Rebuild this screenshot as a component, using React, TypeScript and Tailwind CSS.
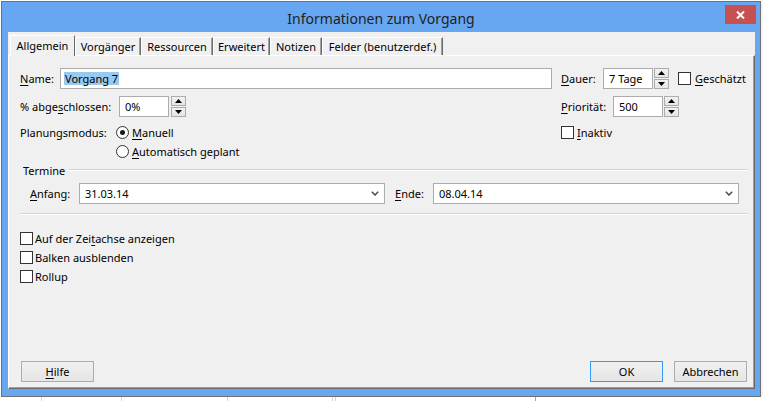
import React from "react";

const TABS = [
  { label: "Allgemein", w: "w-[65px]", active: true },
  { label: "Vorgänger", w: "w-[66px]" },
  { label: "Ressourcen", w: "w-[72px]" },
  { label: "Erweitert", w: "w-[57px]" },
  { label: "Notizen", w: "w-[52px]" },
  { label: "Felder (benutzerdef.)", w: "w-[121px]" },
];

function U({ children }: { children: React.ReactNode }) {
  return <span className="underline underline-offset-[2px] decoration-[1px]">{children}</span>;
}

function Check() {
  return <div className="w-[13px] h-[13px] shrink-0 border border-[#333333] bg-white" />;
}

function Radio({ checked = false }: { checked?: boolean }) {
  return (
    <div className="w-[13px] h-[13px] shrink-0 rounded-full border border-[#333333] bg-white flex items-center justify-center">
      {checked && <div className="w-[5px] h-[5px] rounded-full bg-[#1a1a1a]" />}
    </div>
  );
}

function Arrow({ up }: { up?: boolean }) {
  return (
    <svg width="7" height="4" viewBox="0 0 7 4">
      <path d={up ? "M3.5 0L7 4H0z" : "M0 0H7L3.5 4z"} fill="#000" />
    </svg>
  );
}

function Spin() {
  return (
    <div className="flex flex-col w-[15px] h-[21px] gap-[1px] shrink-0">
      <div className="flex-1 border border-[#acacac] bg-gradient-to-b from-[#f2f2f2] to-[#e5e5e5] flex items-center justify-center">
        <Arrow up />
      </div>
      <div className="flex-1 border border-[#acacac] bg-gradient-to-b from-[#f2f2f2] to-[#e5e5e5] flex items-center justify-center">
        <Arrow />
      </div>
    </div>
  );
}

function Combo({ value }: { value: string }) {
  return (
    <div className="w-[306px] h-[21px] border border-[#acacac] bg-white flex items-center pl-[5px] pr-[5px]">
      <span className="flex-1">{value}</span>
      <svg width="8" height="5" viewBox="0 0 8 5">
        <path d="M0.8 0.8L4 4L7.2 0.8" fill="none" stroke="#4a4a4a" strokeWidth="1.5" />
      </svg>
    </div>
  );
}

function Button({ children, primary }: { children: React.ReactNode; primary?: boolean }) {
  return (
    <div
      className={`w-[73px] h-[21px] flex items-center justify-center border bg-gradient-to-b from-[#f0f0f0] to-[#e5e5e5] ${
        primary ? "border-[#3399ff]" : "border-[#acacac]"
      }`}
    >
      {children}
    </div>
  );
}

export default function App() {
  return (
    <div className="w-[763px] h-[401px] bg-white overflow-hidden font-['Noto_Sans',sans-serif] text-[11px] text-black leading-none">
      <div className="flex">
        {/* ── Window ── */}
        <div className="relative ml-[1px] mt-[1px] w-[760px] h-[396px] border border-[#707070] bg-[#67a6f0] flex flex-col">
          <div className="absolute top-[3px] right-[4px] w-[31px] h-[19px] bg-[#c75050] flex items-center justify-center">
            <svg width="9" height="8" viewBox="0 0 9 8">
              <path d="M1 0.5L8 7.5M8 0.5L1 7.5" stroke="#fff" strokeWidth="2" />
            </svg>
          </div>

          <div className="h-[30px] flex items-center justify-center pt-[3px] text-[14px] text-[#1e1e1e]">
            Informationen zum Vorgang
          </div>

          {/* ── Client ── */}
          <div className="ml-[6px] w-[747px] bg-[#f0f0f0] flex flex-col">
            <div className="h-[23px] flex items-end pl-[2px]">
              {TABS.map((t) =>
                t.active ? (
                  <div
                    key={t.label}
                    className={`${t.w} h-[21px] -mb-[1px] relative z-10 bg-[#f0f0f0] border-t border-l border-r border-t-white border-l-white border-r-[#696969] flex items-center justify-center pb-[2px]`}
                  >
                    {t.label}
                  </div>
                ) : (
                  <div
                    key={t.label}
                    className={`${t.w} h-[18px] bg-[#f0f0f0] border-t border-l border-r border-t-white border-l-white border-r-[#696969] shadow-[inset_-1px_0_0_#a0a0a0] flex items-center justify-center pb-[1px]`}
                  >
                    {t.label}
                  </div>
                )
              )}
            </div>

            {/* ── Tab page ── */}
            <div className="h-[334px] border border-t-white border-l-white border-r-[#696969] border-b-[#696969] shadow-[inset_-1px_-1px_0_#a0a0a0] pl-[11px] pr-[6px] flex flex-col">
              {/* Name / Dauer */}
              <div className="mt-[12px] h-[21px] flex items-center">
                <div className="w-[541px] flex items-center">
                  <span className="w-[40px]"><U>N</U>ame:</span>
                  <div className="w-[492px] h-[21px] border border-[#acacac] bg-white flex items-center pl-[3px]">
                    <span className="bg-[#99c9ef] px-[1px] h-[13px] flex items-center">Vorgang 7</span>
                  </div>
                </div>
                <span className="w-[42px]"><U>D</U>auer:</span>
                <div className="w-[50px] h-[21px] border border-[#acacac] bg-white flex items-center pl-[5px]">7 Tage</div>
                <div className="ml-[1px]"><Spin /></div>
                <div className="ml-[9px]"><Check /></div>
                <span className="ml-[4px]"><U>G</U>eschätzt</span>
              </div>

              {/* % abgeschlossen / Priorität */}
              <div className="mt-[7px] h-[21px] flex items-center">
                <div className="w-[541px] flex items-center">
                  <span className="w-[99px]">% abge<U>s</U>chlossen:</span>
                  <div className="w-[50px] h-[21px] border border-[#acacac] bg-white flex items-center pl-[5px]">0%</div>
                  <div className="ml-[2px]"><Spin /></div>
                </div>
                <span className="w-[52px]"><U>P</U>riorität:</span>
                <div className="w-[50px] h-[21px] border border-[#acacac] bg-white flex items-center pl-[5px]">500</div>
                <div className="ml-[1px]"><Spin /></div>
              </div>

              {/* Planungsmodus / Inaktiv */}
              <div className="mt-[6px] h-[19px] flex items-center">
                <div className="w-[541px] flex items-center">
                  <span className="w-[96px]">Planungsmodus:</span>
                  <Radio checked />
                  <span className="ml-[3px]"><U>M</U>anuell</span>
                </div>
                <Check />
                <span className="ml-[3px]"><U>I</U>naktiv</span>
              </div>
              <div className="h-[19px] flex items-center pl-[96px]">
                <Radio />
                <span className="ml-[3px]"><U>A</U>utomatisch geplant</span>
              </div>

              {/* Termine */}
              <div className="mt-[2px] h-[14px] flex items-center">
                <span className="ml-[3px]">Termine</span>
                <div className="flex-1 ml-[4px] border-t border-[#d5d5d5] border-b border-b-white" />
              </div>
              <div className="mt-[6px] h-[21px] flex items-center pl-[10px]">
                <span className="w-[49px]"><U>A</U>nfang:</span>
                <Combo value="31.03.14" />
                <span className="ml-[10px] w-[38px]"><U>E</U>nde:</span>
                <Combo value="08.04.14" />
              </div>
              <div className="mt-[9px] border-t border-[#d5d5d5] border-b border-b-white" />

              {/* Options */}
              <div className="mt-[14px] flex flex-col">
                <div className="h-[19px] flex items-center">
                  <Check />
                  <span className="ml-[2px]">Auf der Zei<U>t</U>achse anzeigen</span>
                </div>
                <div className="h-[19px] flex items-center">
                  <Check />
                  <span className="ml-[2px]">Balken ausblenden</span>
                </div>
                <div className="h-[19px] flex items-center">
                  <Check />
                  <span className="ml-[2px]">Rollup</span>
                </div>
              </div>

              {/* Buttons */}
              <div className="mt-auto mb-[6px] flex items-center pl-[1px] pr-[1px]">
                <Button><U>H</U>ilfe</Button>
                <div className="flex-1" />
                <Button primary>OK</Button>
                <div className="ml-[11px]"><Button>Abbrechen</Button></div>
              </div>
            </div>
          </div>
        </div>
        <div className="flex-1 mt-[1px] bg-[#f4f4f4]" />
      </div>

      {/* background grid below the window */}
      <div className="h-[4px] flex">
        <div className="w-[42px] border-r border-[#d4d4d4]" />
        <div className="w-[80px] border-r border-[#d4d4d4]" />
        <div className="w-[106px] border-r border-[#d4d4d4]" />
        <div className="w-[105px] border-r border-[#d4d4d4]" />
        <div className="w-[3px] border-r border-[#d4d4d4]" />
        <div className="w-[200px] border-r border-[#7cc47c]" />
      </div>
    </div>
  );
}
